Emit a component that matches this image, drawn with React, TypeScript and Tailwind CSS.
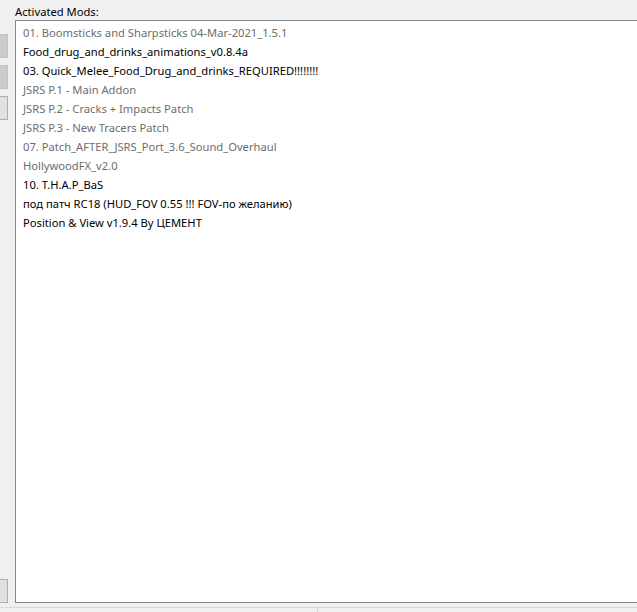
const mods: { name: string; active: boolean }[] = [
  { name: '01. Boomsticks and Sharpsticks 04-Mar-2021_1.5.1', active: false },
  { name: 'Food_drug_and_drinks_animations_v0.8.4a', active: true },
  { name: '03. Quick_Melee_Food_Drug_and_drinks_REQUIRED!!!!!!!!', active: true },
  { name: 'JSRS P.1 - Main Addon', active: false },
  { name: 'JSRS P.2 - Cracks + Impacts Patch', active: false },
  { name: 'JSRS P.3 - New Tracers Patch', active: false },
  { name: '07. Patch_AFTER_JSRS_Port_3.6_Sound_Overhaul', active: false },
  { name: 'HollywoodFX_v2.0', active: false },
  { name: '10. T.H.A.P_BaS', active: true },
  { name: 'под патч RC18 (HUD_FOV 0.55 !!! FOV-по желанию)', active: true },
  { name: 'Position & View v1.9.4 By ЦЕМЕНТ', active: true },
];

export default function App() {
  return (
    <div
      className="w-[637px] h-[612px] overflow-hidden bg-[#f0f0f0] flex flex-col text-[11.2px] text-black"
      style={{ fontFamily: '"Noto Sans", "Open Sans", sans-serif' }}
    >
      <div className="flex h-[603px]">
        {/* side buttons, cut off by the left edge */}
        <div className="w-[15px] shrink-0 flex flex-col">
          <div className="h-[34px]" />
          <div className="w-[8px] h-[24px] bg-[#cccccc] border-r border-y border-[#c4c4c4]" />
          <div className="h-[7px]" />
          <div className="w-[8px] h-[24px] bg-[#cccccc] border-r border-y border-[#c4c4c4]" />
          <div className="h-[7px]" />
          <div className="w-[8px] h-[24px] bg-[#e1e1e1] border-r border-y border-[#adadad]" />
          <div className="flex-1" />
          <div className="w-[8px] h-[24px] bg-[#e1e1e1] border-r border-y border-[#adadad]" />
        </div>

        <div className="flex-1 min-w-0 flex flex-col">
          <div className="h-[20px] leading-[20px] pt-[2px]">Activated Mods:</div>
          <div className="w-[640px] h-[583px] bg-white border border-[#828790] pt-[2px] pl-[7px]">
            {mods.map((m) => (
              <div
                key={m.name}
                className={`h-[19px] leading-[19px] whitespace-nowrap ${m.active ? 'text-black' : 'text-[#6d6d6d]'}`}
              >
                {m.name}
              </div>
            ))}
          </div>
        </div>
      </div>

      {/* status bar */}
      <div className="h-[4px]" />
      <div className="flex-1 border-t border-[#dadada] flex">
        <div className="w-[317px] h-full" />
        <div className="w-[1px] mt-[1px] h-full bg-[#d2d2d2]" />
      </div>
    </div>
  );
}
